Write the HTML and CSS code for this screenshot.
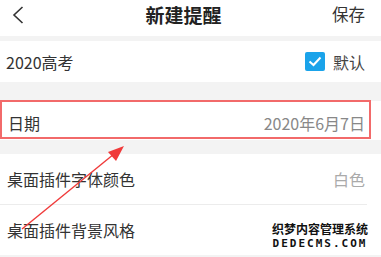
FILE: index.html
```html
<!DOCTYPE html>
<html lang="zh">
<head>
<meta charset="utf-8">
<link rel="stylesheet" href="styles.css">
</head>
<body>
<div class="page">
  <header class="header">
    <div class="back">
      <svg width="12" height="18" viewBox="0 0 12 18"><polyline points="10.5,1 2,9 10.5,17" fill="none" stroke="#333" stroke-width="1.6"/></svg>
    </div>
    <div class="title">新建提醒</div>
    <div class="save">保存</div>
  </header>
  <div class="gap gap-top"></div>
  <div class="row row-first">
    <span class="label">2020高考</span>
    <span class="check-wrap">
      <span class="checkbox"><svg width="14" height="11" viewBox="0 0 14 11"><polyline points="1.5,5.5 5.5,9 12.5,1.5" fill="none" stroke="#fff" stroke-width="2"/></svg></span>
      <span class="check-label">默认</span>
    </span>
  </div>
  <div class="gap gap-mid"></div>
  <div class="row row-date">
    <span class="label">日期</span>
    <span class="value">2020年6月7日</span>
  </div>
  <div class="gap gap-low"></div>
  <div class="group">
    <div class="row row-tall">
      <span class="label">桌面插件字体颜色</span>
      <span class="value light">白色</span>
    </div>
    <div class="divider"></div>
    <div class="row row-tall">
      <span class="label">桌面插件背景风格</span>
    </div>
  </div>

  <div class="highlight"></div>
  <svg class="arrow" width="381" height="257" viewBox="0 0 381 257">
    <line x1="22" y1="229" x2="114" y2="154" stroke="#f03a3a" stroke-width="1.4"/>
    <polygon points="124,146 108,152 116,161" fill="#f03a3a"/>
  </svg>
  <div class="watermark">
    <div class="wm-cn">织梦内容管理系统</div>
    <div class="wm-en">DEDECMS.COM</div>
  </div>
</div>
</body>
</html>
```

FILE: styles.css
```css
html, body {
  margin: 0;
  padding: 0;
}
body {
  font-family: "Noto Sans CJK SC", "Noto Sans", sans-serif;
  background: #f3f3f3;
  color: #333;
}
.page {
  position: relative;
  width: 381px;
  height: 257px;
  overflow: hidden;
  background: #f3f3f3;
}
.header {
  height: 36px;
  background: #fff;
  display: grid;
  grid-template-columns: 1fr auto 1fr;
  align-items: center;
  padding: 0 16px 0 12px;
}
.back {
  display: flex;
  align-items: center;
  height: 18px;
  margin-top: -6px;
}
.title {
  font-size: 19px;
  font-weight: 700;
  color: #222;
  margin-left: -10px;
  margin-top: -8px;
}
.save {
  justify-self: end;
  font-size: 16.5px;
  color: #333;
  margin-top: -8px;
}
.gap-top { height: 5px; }
.gap-mid { height: 19px; }
.gap-low { height: 14px; }
.row {
  background: #fff;
  display: flex;
  align-items: center;
  justify-content: space-between;
  padding: 0 16px 0 6px;
  font-size: 16px;
}
.row-first { height: 41px; }
.row-date { height: 39px; padding-left: 8px; padding-top: 4px; box-sizing: border-box; }
.row-tall { height: 50px; padding-left: 7px; }
.label { color: #333; }
.value { color: #888; }
.value.light { color: #aaa; }
.check-wrap {
  display: flex;
  align-items: center;
  gap: 8px;
}
.checkbox {
  width: 20px;
  height: 19px;
  border-radius: 2px;
  background: #1aa3ea;
  display: flex;
  align-items: center;
  justify-content: center;
}
.check-label { color: #444; }
.group { background: #fff; }
.divider {
  height: 1px;
  background: #ececec;
  margin-right: 14px;
}
.highlight {
  position: absolute;
  left: 0;
  top: 100px;
  width: 367px;
  height: 35px;
  border: 2px solid #f26a6a;
}
.arrow {
  position: absolute;
  left: 0;
  top: 0;
}
.watermark {
  position: absolute;
  left: 270px;
  top: 220px;
  width: 100px;
  text-align: center;
  font-weight: 700;
  color: #111;
  text-shadow: 1px 0 #fff, -1px 0 #fff, 0 1px #fff, 0 -1px #fff, 1px 1px #fff, -1px -1px #fff, 1px -1px #fff, -1px 1px #fff;
}
.wm-cn {
  font-size: 12px;
  line-height: 17px;
}
.wm-en {
  font-family: "DejaVu Sans Mono", monospace;
  font-size: 11px;
  line-height: 12px;
  letter-spacing: 2px;
  margin-top: 1px;
}
```
